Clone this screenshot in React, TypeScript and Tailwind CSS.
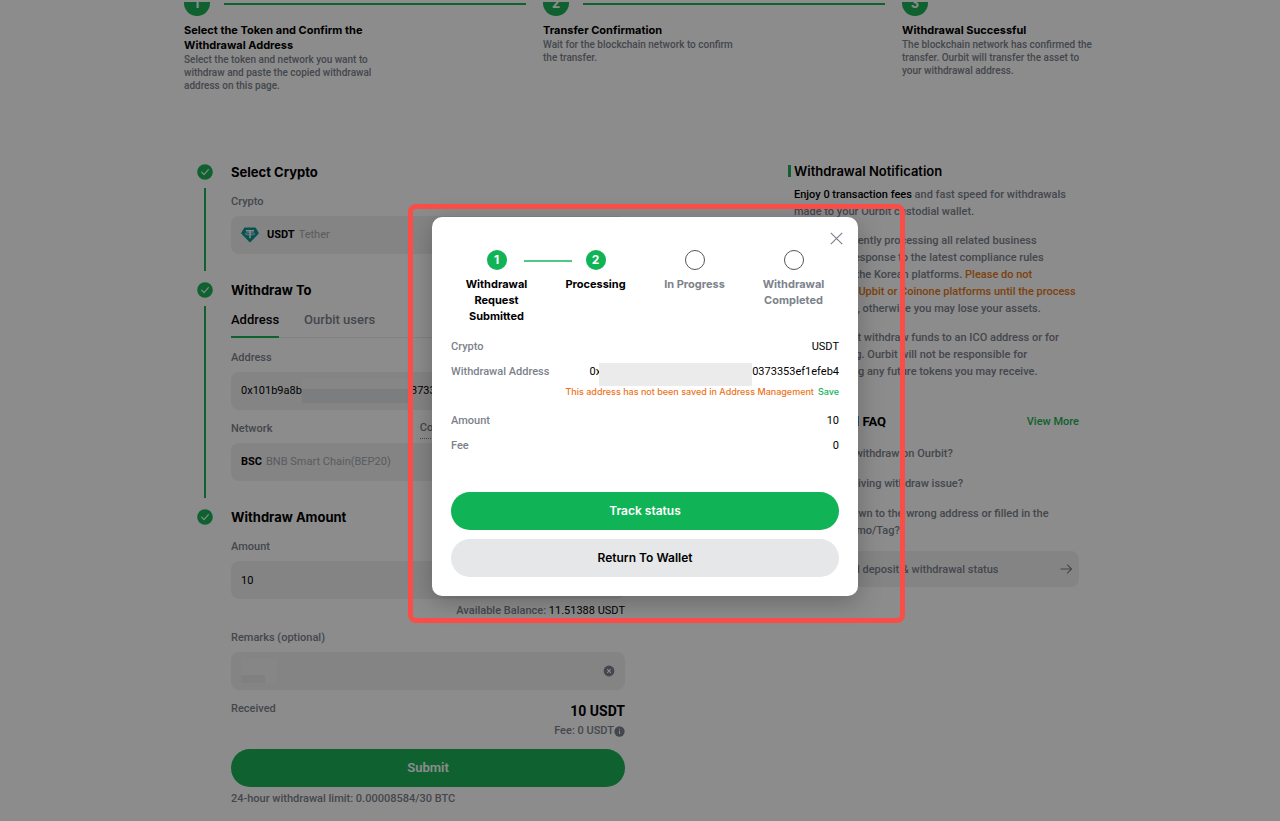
import type { ReactNode } from "react";

const intro = [
  {
    title: "Select the Token and Confirm the Withdrawal Address",
    text: "Select the token and network you want to withdraw and paste the copied withdrawal address on this page.",
  },
  {
    title: "Transfer Confirmation",
    text: "Wait for the blockchain network to confirm the transfer.",
  },
  {
    title: "Withdrawal Successful",
    text: "The blockchain network has confirmed the transfer. Ourbit will transfer the asset to your withdrawal address.",
  },
];

const progress = [
  { label: "Withdrawal Request Submitted", done: true },
  { label: "Processing", done: true },
  { label: "In Progress", done: false },
  { label: "Withdrawal Completed", done: false },
];

function CheckDot() {
  return (
    <svg viewBox="0 0 16 16" className="size-4 shrink-0" aria-hidden="true">
      <circle cx="8" cy="8" r="7.8" fill="#1cb158" />
      <path d="M4.6 8.2 7 10.6 11.4 5.6" fill="none" stroke="#fff" strokeWidth="1.1" strokeLinecap="round" strokeLinejoin="round" />
    </svg>
  );
}

function TetherIcon() {
  return (
    <svg viewBox="0 0 18 16" className="h-4 w-[18px] shrink-0" aria-hidden="true">
      <path d="M3.8.6h10.4a.8.8 0 0 1 .7.4l2.8 4.8a.8.8 0 0 1-.1 1L9.6 15a.9.9 0 0 1-1.2 0L.4 6.8a.8.8 0 0 1-.1-1L3.1 1a.8.8 0 0 1 .7-.4z" fill="#139690" />
      <path d="M5 3.8h8M9 3.8v7.4" stroke="#fff" strokeWidth="1.4" fill="none" />
      <ellipse cx="9" cy="6.8" rx="4.8" ry="1.1" fill="none" stroke="#fff" strokeWidth=".7" />
    </svg>
  );
}

function Section({ title, last, children }: { title: string; last?: boolean; children: ReactNode }) {
  return (
    <section className={last ? "flex gap-[18px]" : "flex gap-[18px] pb-[26px]"}>
      <div className="flex w-4 flex-col items-center pt-0.5">
        <CheckDot />
        {!last && <div className="-mb-[17px] mt-2 w-0.5 flex-1 bg-[#1cb158]" />}
      </div>
      <div className="min-w-0 flex-1">
        <h2 className="font-['Inter'] text-[13px] font-bold leading-5">{title}</h2>
        {children}
      </div>
    </section>
  );
}

const label = "block text-[11px] leading-5 text-[#7c828c]";
const field = "mt-1 flex h-[38px] w-full items-center rounded-lg bg-[#f1f1f2] px-2.5 text-[11px] font-normal";

function WithdrawForm() {
  return (
    <form className="w-[428px]" onSubmit={(e) => e.preventDefault()}>
      <Section title="Select Crypto">
        <div className="mt-2.5">
          <span className={label}>Crypto</span>
          <button type="button" className={field}>
            <TetherIcon />
            <b className="ml-2 font-bold">USDT</b>
            <span className="ml-1 text-[#a3a6ab]">Tether</span>
          </button>
        </div>
      </Section>

      <Section title="Withdraw To">
        <div className="mt-2.5 flex h-7 gap-[25px] border-b border-[#ececee] text-[13px]">
          <button type="button" className="-mb-px flex border-b-2 border-[#1cb158] leading-5">Address</button>
          <button type="button" className="flex leading-5 text-[#7c828c]">Ourbit users</button>
        </div>
        <div className="mt-2.5">
          <label htmlFor="address" className={label}>Address</label>
          <div className={field}>
            <input id="address" defaultValue="0x101b9a8b" className="w-[61px] bg-transparent outline-none" />
            <span className="h-6 w-[109px] bg-linear-to-b from-[#f5f5f6] from-40% to-[#e2e4e8] to-40%" />
            <span>373353ef1efeb4</span>
          </div>
        </div>
        <div className="mt-[9px]">
          <div className="flex justify-between">
            <span className={label}>Network</span>
            <a href="#contract" className="border-b border-dotted border-[#7c828c] text-[11px] leading-[18px] text-[#7c828c]">
              Contract Address Ending with 7B3197955
            </a>
          </div>
          <button type="button" className={field}>
            <b className="font-bold">BSC</b>
            <span className="ml-1 text-[#a3a6ab]">BNB Smart Chain(BEP20)</span>
          </button>
        </div>
      </Section>

      <Section title="Withdraw Amount" last>
        <div className="mt-2.5">
          <label htmlFor="amount" className={label}>Amount</label>
          <input id="amount" defaultValue="10" className={field} />
          <p className="mt-0.5 text-right text-[11px] leading-5 text-[#7c828c]">
            Available Balance: <span className="font-normal text-black">11.51388 USDT</span>
          </p>
        </div>
        <div className="mt-[7px]">
          <label htmlFor="remarks" className={label}>Remarks (optional)</label>
          <div className={field}>
            <span className="flex h-6 w-9 shrink-0 items-end bg-[#f4f4f4]">
              <span className="h-2 w-6 bg-[#e9e9ea]" />
            </span>
            <input id="remarks" className="min-w-0 flex-1 bg-transparent outline-none" />
            <button type="button" aria-label="Clear remarks">
              <svg viewBox="0 0 12 12" className="size-3">
                <circle cx="6" cy="6" r="5.4" fill="#7c828c" />
                <path d="m4.2 4.2 3.6 3.6m0-3.6L4.2 7.8" stroke="#fff" strokeWidth="1.1" />
              </svg>
            </button>
          </div>
        </div>
        <div className="mt-[9px] flex justify-between">
          <span className={label}>Received</span>
          <div className="flex flex-col items-end pt-0.5">
            <strong className="text-[14px] font-bold leading-5">10 USDT</strong>
            <span className="flex items-center text-[11px] leading-5 text-[#7c828c]">
              Fee: 0 USDT
              <svg viewBox="0 0 12 12" className="size-[11px]" aria-hidden="true">
                <circle cx="6" cy="6" r="5.6" fill="#7c828c" />
                <path d="M6 5.2v3.4M6 3v1.1" stroke="#fff" strokeWidth="1.1" />
              </svg>
            </span>
          </div>
        </div>
        <button type="submit" className="mt-2 h-[38px] w-full rounded-full bg-[#1cb158] text-[13px] font-semibold text-white">
          Submit
        </button>
        <p className="mt-0.5 text-[11px] leading-5 text-[#7c828c]">24-hour withdrawal limit: 0.00008584/30 BTC</p>
      </Section>
    </form>
  );
}

function Notices() {
  return (
    <aside className="w-[291px] text-[11px] leading-[17px] text-[#7c828c]">
      <h2 className="flex items-center gap-[3px] font-['Inter'] text-[13px] font-semibold leading-[18px] text-black">
        <span className="h-3 w-[3px] bg-[#1cb158]" />
        Withdrawal Notification
      </h2>
      <div className="whitespace-nowrap pl-1.5 pt-1.5">
        <p className="mb-3">
          <span className="text-black">Enjoy 0 transaction fees</span> and fast speed for withdrawals
          <br />
          made to your Ourbit custodial wallet.
        </p>
        <p className="mb-3">
          Ourbit is currently processing all related business
          <br />
          changes in response to the latest compliance rules
          <br />
          released for the Korean platforms. <span className="text-[#e57616]">Please do not</span>
          <br />
          <span className="text-[#e57616]">withdraw via Upbit or Coinone platforms until the process</span>
          <br />
          is completed, otherwise you may lose your assets.
        </p>
        <p>
          Please do not withdraw funds to an ICO address or for
          <br />
          crowdfunding. Ourbit will not be responsible for
          <br />
          compensating any future tokens you may receive.
        </p>
        <div className="mb-[13px] mt-8 flex items-center justify-between leading-5">
          <h2 className="text-[13px] font-bold text-black">Withdrawal FAQ</h2>
          <a href="#faq" className="text-[#1cb158]">View More</a>
        </div>
        <ul className="flex flex-col gap-[13px]">
          <li><a href="#how">How could I withdraw on Ourbit?</a></li>
          <li><a href="#issue">Why not receiving withdraw issue?</a></li>
          <li>
            <a href="#wrong">
              Have withdrawn to the wrong address or filled in the
              <br />
              incorrect Memo/Tag?
            </a>
          </li>
        </ul>
        <a href="#status" className="mt-3 flex h-9 items-center justify-between rounded-lg bg-[#f1f1f2] px-1.5">
          <span className="pl-1.5">Confirm all deposit &amp; withdrawal status</span>
          <svg viewBox="0 0 14 12" className="h-3 w-3.5" fill="none" stroke="#7c828c" strokeWidth="1.1" aria-hidden="true">
            <path d="M1.5 6h11M8.2 1.6 12.6 6l-4.4 4.4" />
          </svg>
        </a>
      </div>
    </aside>
  );
}

function WithdrawDialog() {
  return (
    <div role="dialog" aria-label="Withdrawal status" className="relative w-[426px] rounded-[10px] bg-white px-[19px] pb-[19px] pt-[33px] shadow-[0_6px_24px_rgba(0,0,0,0.25)]">
      <button type="button" aria-label="Close" className="absolute right-[15px] top-[15px]">
        <svg viewBox="0 0 13 13" className="size-[13px]" stroke="#7c828c" strokeWidth="1.2">
          <path d="m.8.8 11.4 11.4m0-11.4L.8 12.2" />
        </svg>
      </button>

      <ol className="-mx-1 flex h-[87px] font-['Inter'] text-[11px] font-bold leading-4">
        {progress.map((step, i) => (
          <li key={step.label} className={step.done ? "relative flex flex-1 flex-col items-center" : "relative flex flex-1 flex-col items-center text-[#7c828c]"}>
            {step.done ? (
              <span className="flex size-5 items-center justify-center rounded-full bg-[#10b457] text-[12px] text-white">{i + 1}</span>
            ) : (
              <span className="size-5 rounded-full border border-[#555]" />
            )}
            {i === 0 && <span className="absolute left-[77px] top-2.5 h-0.5 w-12 bg-[#4fc785]" />}
            <span className="mt-1.5 w-[70px] text-center">{step.label}</span>
          </li>
        ))}
      </ol>

      <dl className="text-[11px] font-normal leading-5">
        <div className="flex justify-between">
          <dt className="font-medium text-[#7c828c]">Crypto</dt>
          <dd>USDT</dd>
        </div>
        <div className="mt-[5px] flex justify-between">
          <dt className="font-medium text-[#7c828c]">Withdrawal Address</dt>
          <dd className="flex">
            0x
            <span className="-mb-1 -ml-0.5 mt-px w-[153px] bg-[#ebebec]" />
            0373353ef1efeb4
          </dd>
        </div>
        <div className="flex justify-end gap-1 font-['Inter'] text-[9px] font-medium">
          <dd className="text-[#ec7422]">This address has not been saved in Address Management</dd>
          <dd><button type="button" className="text-[#10b457]">Save</button></dd>
        </div>
        <div className="mt-[9px] flex justify-between">
          <dt className="font-medium text-[#7c828c]">Amount</dt>
          <dd>10</dd>
        </div>
        <div className="mt-[5px] flex justify-between">
          <dt className="font-medium text-[#7c828c]">Fee</dt>
          <dd>0</dd>
        </div>
      </dl>

      <div className="mt-9 flex flex-col gap-[9px] font-['Inter'] text-[12px] font-semibold">
        <button type="button" className="h-[38px] rounded-full bg-[#10b457] text-white">Track status</button>
        <button type="button" className="h-[38px] rounded-full bg-[#e6e7e9]">Return To Wallet</button>
      </div>

      <div className="pointer-events-none absolute -bottom-[27px] -left-6 -right-[47px] -top-[13px] rounded-lg border-[5px] border-[#fb4d47]" />
    </div>
  );
}

export default function App() {
  return (
    <div className="relative min-h-screen overflow-hidden bg-white font-['Roboto','Liberation_Sans',sans-serif] font-medium text-black">
      <main className="mx-auto max-w-[912px] pt-0.5">
        <ol className="grid h-40 grid-cols-[359px_359px_1fr] content-start">
          {intro.map((step, i) => (
            <li key={step.title}>
              <div className="flex h-3.5 items-end gap-3.5 overflow-hidden">
                <span className="flex size-[26px] shrink-0 items-center justify-center rounded-full bg-[#1cb158] text-[14px] font-bold text-white">{i + 1}</span>
                {i < 2 && <span className="mb-[11px] mr-[17px] h-0.5 flex-1 bg-[#1cb158]" />}
              </div>
              <h3 className="mt-[7px] w-[190px] font-['Inter'] text-[11px] font-bold leading-[15px]">{step.title}</h3>
              <p className="w-[194px] text-[10px] leading-[13px] text-[#7c828c]">{step.text}</p>
            </li>
          ))}
        </ol>
        <div className="flex items-start justify-between pl-[13px] pr-[17px]">
          <WithdrawForm />
          <Notices />
        </div>
      </main>
      <div className="absolute inset-0 flex items-start justify-center bg-black/45 pl-[10px] pt-[217px]">
        <WithdrawDialog />
      </div>
    </div>
  );
}
